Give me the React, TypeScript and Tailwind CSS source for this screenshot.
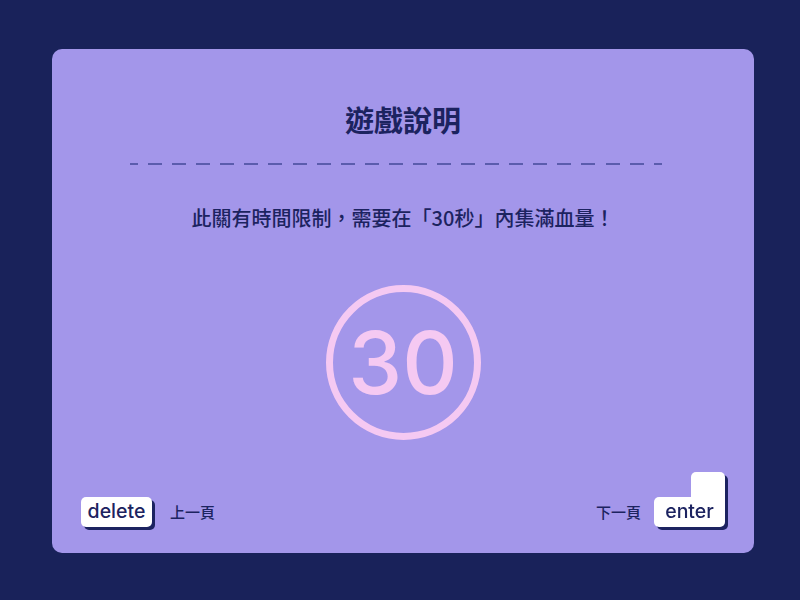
function DashedLine() {
  const middle = Array.from({ length: 21 });
  return (
    <div className="ml-[49px] mt-[23px] flex w-[532px] justify-between self-start">
      <div className="h-[2px] w-[8px] bg-[#5b5cad]" />
      {middle.map((_, i) => (
        <div key={i} className="h-[2px] w-[14px] bg-[#5b5cad]" />
      ))}
      <div className="h-[2px] w-[8px] bg-[#5b5cad]" />
    </div>
  );
}

function DeleteKey() {
  return (
    <div className="flex h-[30px] w-[71px] items-center justify-center rounded-[5px] bg-white text-[19.5px] font-medium leading-none text-[#1c2360] shadow-[3px_3px_0_#1c2360]">
      delete
    </div>
  );
}

function EnterKey() {
  return (
    <div className="flex flex-col items-end drop-shadow-[3px_3px_0_#1c2360]">
      <div className="h-[26px] w-[34px] rounded-t-[5px] bg-white" />
      <div className="-mt-px flex h-[30px] w-[71px] items-center justify-center rounded-[5px] rounded-tr-none bg-white pb-[1px] text-[19.5px] font-medium leading-none text-[#1c2360]">
        enter
      </div>
    </div>
  );
}

const cjk = { fontFamily: '"Noto Sans CJK TC", sans-serif' };

export default function App() {
  return (
    <div
      className="h-[600px] w-[800px] bg-[#19225a] pl-[52px] pt-[49px]"
      style={{ fontFamily: '"Inter", "Noto Sans CJK TC", sans-serif' }}
    >
      <div className="flex h-[504px] w-[702px] flex-col items-center rounded-[10px] bg-[#a396ea] px-[29px] pb-[26px] pt-[49px]">
        <h1 className="text-[29px] font-bold leading-[42px] text-[#1c2360]" style={cjk}>
          遊戲說明
        </h1>
        <DashedLine />
        <p className="mt-[39px] text-[20px] font-medium leading-[28px] text-[#1c2360]" style={cjk}>
          此關有時間限制，需要在「30秒」內集滿血量！
        </p>
        <div className="mt-[53px] flex h-[155px] w-[155px] items-center justify-center rounded-full border-[7px] border-[#f5c9f2]">
          <span className="text-[86px] font-medium leading-none text-[#f5c9f2]">30</span>
        </div>

        <div className="mt-auto flex w-full items-end justify-between">
          <div className="flex items-center">
            <DeleteKey />
            <span className="ml-[18px] text-[15px] font-medium text-[#1c2360]" style={cjk}>
              上一頁
            </span>
          </div>
          <div className="flex items-end">
            <span className="mb-[4px] mr-[13px] text-[15px] font-medium text-[#1c2360]" style={cjk}>
              下一頁
            </span>
            <EnterKey />
          </div>
        </div>
      </div>
    </div>
  );
}
